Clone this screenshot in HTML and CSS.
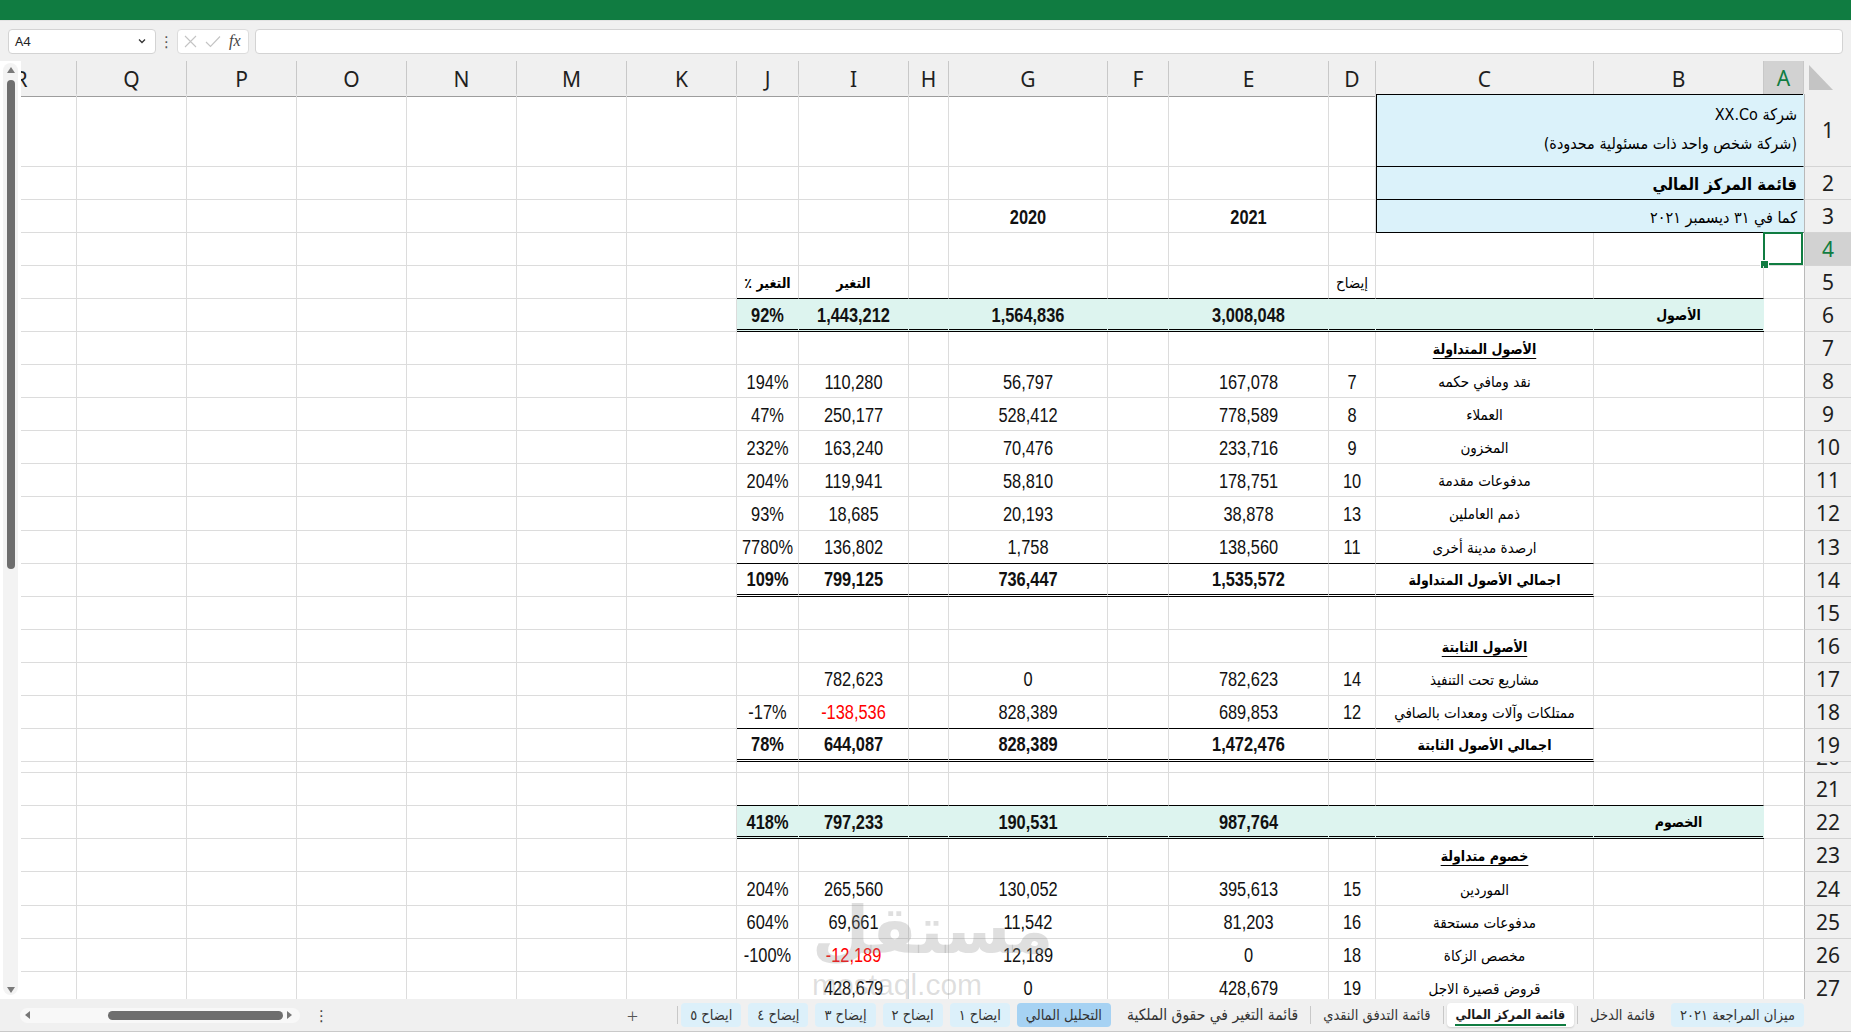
FILE: index.html
```html
<!DOCTYPE html>
<html lang="ar">
<head>
    <meta charset="UTF-8">
    <title>قائمة المركز المالي</title>
    <link rel="stylesheet" href="styles.css">
</head>
<body>
    <div class="titlebar"></div>

    <div class="formula-bar">
        <div class="name-box">
            <span>A4</span>
            <svg width="10" height="10" viewBox="0 0 10 10"><path d="M2 3.5 L5 6.5 L8 3.5" fill="none" stroke="#333" stroke-width="1.3"/></svg>
        </div>
        <span class="fb-dots">⋮</span>
        <div class="fb-buttons">
            <svg width="13" height="13" viewBox="0 0 13 13"><path d="M1 1 L12 12 M12 1 L1 12" stroke="#c4c4c4" stroke-width="1.1"/></svg>
            <svg width="16" height="13" viewBox="0 0 16 13"><path d="M1 7 L5.5 11.5 L15 1.5" fill="none" stroke="#c4c4c4" stroke-width="1.1"/></svg>
            <span class="fx">fx</span>
        </div>
        <div class="fb-input"></div>
    </div>

    <div class="sheet">
        <div class="vscroll">
            <div class="vtrack">
                <span class="arrow-up"></span>
                <div class="vthumb"></div>
                <span class="arrow-down"></span>
            </div>
        </div>
        <div class="grid" id="grid"></div>
        <div class="watermark">
            <div class="wm-logo">مستقل</div>
            <div class="wm-url">mostaql.com</div>
        </div>
    </div>

    <div class="tabbar">
        <div class="hscroll">
            <span class="arrow-left"></span>
            <div class="hthumb"></div>
            <span class="arrow-right"></span>
        </div>
        <span class="tb-dots">⋮</span>
        <div class="tab-area">
            <span class="add-sheet">+</span>
            <span class="tab-sep"></span>
            <div class="tabs">
                <span class="tab tinted">ميزان المراجعة ٢٠٢١</span>
                <span class="tab-sep hidden"></span>
                <span class="tab">قائمة الدخل</span>
                <span class="tab-sep"></span>
                <span class="tab active">قائمة المركز المالي</span>
                <span class="tab-sep"></span>
                <span class="tab">قائمة التدفق النقدي</span>
                <span class="tab-sep"></span>
                <span class="tab wide">قائمة التغير في حقوق الملكية</span>
                <span class="tab-sep hidden"></span>
                <span class="tab strong">التحليل المالي</span>
                <span class="tab-sep hidden"></span>
                <span class="tab tinted">ايضاح ١</span>
                <span class="tab-sep hidden"></span>
                <span class="tab tinted">ايضاح ٢</span>
                <span class="tab-sep hidden"></span>
                <span class="tab tinted">إيضاح ٣</span>
                <span class="tab-sep hidden"></span>
                <span class="tab tinted">إيضاح ٤</span>
                <span class="tab-sep hidden"></span>
                <span class="tab tinted">ايضاح ٥</span>
            </div>
        </div>
    </div>

    <script>
        const cols = ["R", "Q", "P", "O", "N", "M", "K", "J", "I", "H", "G", "F", "E", "D", "C", "B", "A"];
        const grid = document.getElementById("grid");

        // one line of the statement: label, note, 2021, 2020, change, change %
        function line(n, label, note, e, g, i, j) {
            const cells = {
                C: { t: label, cls: "ar" },
                D: { t: note },
                E: { t: e },
                G: { t: g },
                I: { t: i, cls: i.startsWith("-") ? "neg" : "" },
                J: { t: j }
            };
            return { n, cells };
        }

        function total(n, label, e, g, i, j) {
            return {
                n, kind: "total",
                cells: { C: { t: label, cls: "ar b" }, E: { t: e }, G: { t: g }, I: { t: i }, J: { t: j } }
            };
        }

        function band(n, label, e, g, i, j) {
            return {
                n, kind: "band",
                cells: { B: { t: label, cls: "ar b" }, E: { t: e }, G: { t: g }, I: { t: i }, J: { t: j } }
            };
        }

        const rows = [
            { n: 1, size: "tall", cells: { C: { html: "<div>شركة XX.Co</div><div>(شركة شخص واحد ذات مسئولية محدودة)</div>", span: 3, cls: "box box-top ar lines" } } },
            { n: 2, cells: { C: { t: "قائمة المركز المالي", span: 3, cls: "box ar title" } } },
            { n: 3, cells: { E: { t: "2021", cls: "b" }, G: { t: "2020", cls: "b" }, C: { t: "كما في ٣١ ديسمبر  ٢٠٢١", span: 3, cls: "box ar" } } },
            { n: 4, sel: true, cells: { A: { t: "", cls: "sel" } } },
            { n: 5, cells: { J: { t: "التغير ٪", cls: "ar b" }, I: { t: "التغير", cls: "ar b" }, D: { t: "إيضاح", cls: "ar" } } },
            band(6, "الأصول", "3,008,048", "1,564,836", "1,443,212", "92%"),
            { n: 7, cells: { C: { t: "الأصول المتداولة", cls: "ar b u" } } },
            line(8, "نقد ومافي حكمه", "7", "167,078", "56,797", "110,280", "194%"),
            line(9, "العملاء", "8", "778,589", "528,412", "250,177", "47%"),
            line(10, "المخزون", "9", "233,716", "70,476", "163,240", "232%"),
            line(11, "مدفوعات مقدمة", "10", "178,751", "58,810", "119,941", "204%"),
            line(12, "ذمم العاملين", "13", "38,878", "20,193", "18,685", "93%"),
            line(13, "ارصدة مدينة أخرى", "11", "138,560", "1,758", "136,802", "7780%"),
            total(14, "اجمالي الأصول المتداولة", "1,535,572", "736,447", "799,125", "109%"),
            { n: 15, cells: {} },
            { n: 16, cells: { C: { t: "الأصول الثابتة", cls: "ar b u" } } },
            line(17, "مشاريع تحت التنفيذ", "14", "782,623", "0", "782,623", ""),
            line(18, "ممتلكات وآلات ومعدات بالصافي", "12", "689,853", "828,389", "-138,536", "-17%"),
            total(19, "اجمالي الأصول الثابتة", "1,472,476", "828,389", "644,087", "78%"),
            { n: 20, size: "tiny", cells: {} },
            { n: 21, cells: {} },
            band(22, "الخصوم", "987,764", "190,531", "797,233", "418%"),
            { n: 23, cells: { C: { t: "خصوم متداولة", cls: "ar b u" } } },
            line(24, "الموردين", "15", "395,613", "130,052", "265,560", "204%"),
            line(25, "مدفوعات مستحقة", "16", "81,203", "11,542", "69,661", "604%"),
            line(26, "مخصص الزكاة", "18", "0", "12,189", "-12,189", "-100%"),
            line(27, "قروض قصيرة الاجل", "19", "428,679", "0", "428,679", "")
        ];

        // column header row
        const head = document.createElement("div");
        head.className = "row head";
        cols.forEach(c => {
            const d = document.createElement("div");
            d.className = "colhead" + (c === "A" ? " active" : "") + (c === "R" ? " cut" : "");
            d.innerHTML = `<span>${c}</span>`;
            head.appendChild(d);
        });
        const corner = document.createElement("div");
        corner.className = "corner";
        corner.innerHTML = '<svg width="26" height="27" viewBox="0 0 26 27"><polygon points="1,1 1,26 25,26" fill="#c4c4c4"/></svg>';
        head.appendChild(corner);
        grid.appendChild(head);

        const built = [];
        rows.forEach(r => {
            const row = document.createElement("div");
            row.className = "row" + (r.size ? " " + r.size : "") + (r.kind ? " " + r.kind : "");
            const byCol = {};
            let skip = 0;
            cols.forEach((c, idx) => {
                if (skip > 0) { skip--; return; }
                const def = r.cells[c] || {};
                const cell = document.createElement("div");
                cell.className = "cell c-" + c;
                if (def.span) {
                    cell.style.gridColumn = "span " + def.span;
                    skip = def.span - 1;
                    cell.classList.add("c-end");
                }
                if (def.cls) def.cls.split(" ").filter(Boolean).forEach(k => cell.classList.add(k));
                if (r.kind === "band" && idx >= 7 && idx <= 15) cell.classList.add("fill", "dbl");
                if (r.kind === "total" && idx >= 7 && idx <= 14) cell.classList.add("dbl");
                if (def.html) cell.innerHTML = def.html;
                else if (def.t) cell.innerHTML = `<span>${def.t}</span>`;
                byCol[c] = cell;
                row.appendChild(cell);
            });
            const rh = document.createElement("div");
            rh.className = "rowhead" + (r.sel ? " active" : "");
            rh.innerHTML = `<span>${r.n}</span>`;
            row.appendChild(rh);
            grid.appendChild(row);
            built.push({ r, byCol });
        });

        // thin black line on top of the total and band rows
        built.forEach((b, k) => {
            if (!b.r.kind || k === 0) return;
            const last = b.r.kind === "band" ? 15 : 14;
            const prev = built[k - 1].byCol;
            for (let idx = 7; idx <= last; idx++) {
                if (prev[cols[idx]]) prev[cols[idx]].classList.add("bb");
            }
        });
    </script>
</body>
</html>
```

FILE: styles.css
```css
* {
    box-sizing: border-box;
}
body {
    margin: 0;
    width: 1851px;
    height: 1032px;
    overflow: hidden;
    background: #fff;
    font-family: "Noto Sans", "DejaVu Sans", sans-serif;
    color: #1f1f1f;
}

/* top */
.titlebar {
    height: 20px;
    background: #107c41;
}
.formula-bar {
    height: 41px;
    background: #f0f0f0;
    display: flex;
    align-items: center;
    padding: 0 8px;
    border-top: 1px solid #e3e3e3;
}
.name-box {
    width: 148px;
    height: 25px;
    background: #fff;
    border: 1px solid #d3d3d3;
    border-radius: 4px;
    display: flex;
    align-items: center;
    justify-content: space-between;
    padding: 0 8px 0 6px;
    font-size: 13px;
    color: #222;
}
.fb-dots {
    width: 21px;
    text-align: center;
    font-size: 15px;
    color: #555;
}
.fb-buttons {
    width: 72px;
    height: 25px;
    background: #fff;
    border: 1px solid #dcdcdc;
    border-radius: 4px;
    display: flex;
    align-items: center;
    gap: 8px;
    padding-left: 6px;
}
.fx {
    font-family: "Liberation Serif", serif;
    font-style: italic;
    font-size: 16px;
    color: #444;
}
.fb-input {
    flex: 1;
    height: 25px;
    margin-left: 6px;
    background: #fff;
    border: 1px solid #d3d3d3;
    border-radius: 4px;
}

/* sheet */
.sheet {
    height: 938px;
    display: flex;
    position: relative;
    overflow: hidden;
}
.vscroll {
    width: 21px;
    flex: none;
    background: #fff;
    padding: 2px 3px 4px 3px;
}
.vtrack {
    height: 100%;
    background: #f3f3f3;
    border-radius: 8px;
    display: flex;
    flex-direction: column;
    align-items: center;
    padding-top: 4px;
}
.arrow-up {
    border-left: 4px solid transparent;
    border-right: 4px solid transparent;
    border-bottom: 6px solid #7a7a7a;
}
.vthumb {
    width: 8px;
    height: 489px;
    margin-top: 7px;
    background: #6e6e6e;
    border-radius: 4px;
}
.arrow-down {
    margin-top: auto;
    margin-bottom: 2px;
    border-left: 4px solid transparent;
    border-right: 4px solid transparent;
    border-top: 6px solid #7a7a7a;
}
.grid {
    flex: 1;
    overflow: hidden;
}
.row {
    display: grid;
    grid-template-columns: 56px repeat(6, 110px) 62px 110px 40px 159px 61px 160px 47px 218px 170px 40px 47px;
    height: 33.05px;
}
.row.head {
    height: 33px;
}
.row.tall {
    height: 73px;
}
.row.tiny {
    height: 11.5px;
}

.colhead {
    background: #f0f0f0;
    border-right: 1px solid #c8c8c8;
    border-bottom: 1px solid #9d9d9d;
    display: flex;
    align-items: center;
    justify-content: center;
    font-size: 21px;
    overflow: hidden;
}
.colhead.cut {
    justify-content: flex-start;
}
.colhead.cut span {
    flex: none;
    width: 110px;
    margin-left: -55px;
    text-align: center;
}
.colhead.active {
    background: #d2d2d2;
    color: #107c41;
    border-bottom: 2px solid #107c41;
}
.corner {
    background: #f0f0f0;
    border-bottom: 1px solid #9d9d9d;
    padding: 3px 0 0 4px;
}

.rowhead {
    background: #f0f0f0;
    border-left: 1px solid #b9b9b9;
    border-bottom: 1px solid #d4d4d4;
    display: flex;
    align-items: center;
    justify-content: center;
    font-size: 21px;
    overflow: hidden;
}
.tiny .rowhead {
    align-items: flex-end;
}
.tiny .rowhead span {
    line-height: 30px;
    flex: none;
}
.rowhead.active {
    background: #d2d2d2;
    color: #107c41;
}

/* cells: numbers imitate a narrow face by squeezing Liberation Sans */
.cell {
    position: relative;
    border-right: 1px solid #dcdcdc;
    border-bottom: 1px solid #dcdcdc;
    display: flex;
    align-items: center;
    justify-content: center;
    padding-top: 2px;
    white-space: nowrap;
    overflow: hidden;
    font-family: "Liberation Sans", sans-serif;
    font-size: 16.4px;
    color: #111;
}
.cell > span {
    display: inline-block;
    transform: scaleY(1.22);
}
.cell.c-A,
.cell.c-end {
    border-right-color: transparent;
}
.cell.ar {
    direction: rtl;
    font-family: "DejaVu Sans Condensed", "DejaVu Sans", sans-serif;
    font-size: 15px;
    color: #000;
}
.cell.ar > span {
    transform: none;
}
.cell.ar.b {
    font-size: 14px;
}
.cell.b,
.total .cell,
.band .cell {
    font-weight: bold;
}
.cell.u span {
    text-decoration: underline;
    text-underline-offset: 4px;
}
.cell.neg {
    color: #ff0000;
}
.cell.bb {
    border-bottom-color: #000;
}
.cell.dbl {
    border-bottom: 3px double #000;
}
.cell.fill {
    background: #ddf4ef;
    border-right-color: transparent;
}

/* title block */
.cell.box {
    background: #dbf2fa;
    border-bottom-color: #000;
    box-shadow: inset 1px 0 0 #000;
    justify-content: flex-start;
    padding: 2px 6px 0 0;
    font-size: 16px;
}
.cell.box-top {
    box-shadow: inset 1px 0 0 #000, inset 0 1px 0 #000;
}
.cell.lines {
    flex-direction: column;
    align-items: flex-start;
    justify-content: flex-end;
    line-height: 29px;
    padding-bottom: 8px;
}
.cell.title {
    font-weight: bold;
    font-size: 16.5px;
}

.cell.sel::before {
    content: "";
    position: absolute;
    left: -1px;
    top: -1px;
    right: 0;
    bottom: 0;
    border: 2px solid #107c41;
}
.cell.sel {
    overflow: visible;
}
.cell.sel::after {
    content: "";
    position: absolute;
    left: -4px;
    bottom: -4px;
    width: 7px;
    height: 7px;
    background: #107c41;
    border: 1px solid #fff;
}

.watermark {
    position: absolute;
    left: 812px;
    top: 832px;
    color: rgba(140, 140, 140, 0.28);
    pointer-events: none;
    text-align: left;
}
.wm-logo {
    font-family: "DejaVu Sans", sans-serif;
    font-weight: bold;
    font-size: 66px;
    line-height: 76px;
    direction: rtl;
}
.wm-url {
    font-family: "Liberation Sans", sans-serif;
    font-size: 30px;
    line-height: 32px;
}

/* sheet tabs */
.tabbar {
    height: 33px;
    background: #f0f0f0;
    border-bottom: 1px solid #c9c9c9;
    display: flex;
    align-items: center;
    padding-left: 20px;
    padding-right: 47px;
}
.hscroll {
    width: 280px;
    height: 15px;
    background: #f8f8f8;
    border-radius: 8px;
    display: flex;
    align-items: center;
    padding: 0 5px;
}
.arrow-left {
    border-top: 4px solid transparent;
    border-bottom: 4px solid transparent;
    border-right: 5px solid #777;
}
.hthumb {
    width: 175px;
    height: 9px;
    margin-left: 78px;
    background: #6e6e6e;
    border-radius: 5px;
}
.arrow-right {
    margin-left: 4px;
    border-top: 4px solid transparent;
    border-bottom: 4px solid transparent;
    border-left: 5px solid #777;
}
.tb-dots {
    margin-left: 14px;
    font-size: 15px;
    color: #444;
}
.tab-area {
    margin-left: auto;
    display: flex;
    align-items: center;
}
.add-sheet {
    font-size: 20px;
    font-weight: 300;
    color: #555;
    margin-right: 36px;
}
.tab-sep {
    width: 1px;
    height: 18px;
    background: #c8c8c8;
    margin: 0 3px;
}
.tab-sep.hidden {
    background: transparent;
}
.tabs {
    display: flex;
    align-items: center;
    direction: rtl;
}
.tab {
    height: 24px;
    padding: 0 9px;
    border-radius: 4px;
    font-family: "DejaVu Sans Condensed", "DejaVu Sans", sans-serif;
    font-size: 14.5px;
    line-height: 24px;
    color: #333;
    white-space: nowrap;
}
.tab.wide {
    font-size: 15.5px;
}
.tab.tinted {
    background: #dcf0fa;
}
.tab.strong {
    background: #a6d2f3;
}
.tab.active {
    background: #fff;
    color: #1a1a1a;
    font-size: 12.5px;
    font-weight: bold;
    box-shadow: 0 1px 2px rgba(0, 0, 0, 0.15);
    position: relative;
}
.tab.active::after {
    content: "";
    position: absolute;
    left: 8px;
    right: 8px;
    bottom: 1px;
    height: 2px;
    background: #107c41;
}
```
